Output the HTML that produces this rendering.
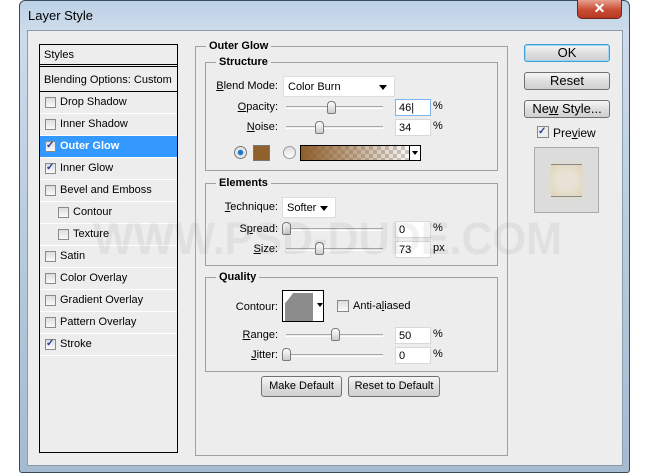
<!DOCTYPE html>
<html><head><meta charset="utf-8"><style>
*{box-sizing:border-box;margin:0;padding:0}
body{width:650px;height:474px;background:#fff;position:relative;overflow:hidden;font-family:"Liberation Sans",sans-serif;font-size:11px;color:#000}
.a{position:absolute}
.frame{left:19px;top:0;width:611px;height:473px;border:1px solid #3a4a5a;border-radius:6px 6px 3px 3px;background:linear-gradient(180deg,#bcd1e6 0%,#cddcec 30px,#b4c8dc 60%,#a6bbd0 100%)}
.client{left:27px;top:30px;width:596px;height:436px;background:#ededed;border:1px solid #8d9aa8}
.close{left:577px;top:0;width:45px;height:19px;border:1px solid #6b2418;border-top:none;border-radius:0 0 5px 5px;background:linear-gradient(#e8a090,#c84b34 55%,#b83a24);color:#fff;font-weight:bold;font-size:14px;text-align:center;line-height:17px}
.list{left:39px;top:44px;width:139px;height:409px;border:1px solid #000;background:#ededed}
.row{position:absolute;left:0;width:137px;height:22px;border-bottom:1px solid #fff;line-height:21px;padding-left:20px}
.cb{position:absolute;width:11px;height:11px;border:1px solid #8a8a8a;background:linear-gradient(#ddd,#fafafa);top:5px;left:5px}
.cb.on::after{content:"✓";position:absolute;left:0;top:-3px;font-size:10px;color:#2a3a9a;font-weight:bold;line-height:14px}
.gb{position:absolute;border:1px solid #a0a0a0}
.gt{position:absolute;background:#ededed;font-weight:bold;padding:0 3px;top:-8px;left:10px;line-height:14px}
.lab{position:absolute;text-align:right;width:90px}
.in{position:absolute;background:#fff;height:17px;width:36px;border:1px solid #d8d8d8;padding-left:3px;line-height:16px}
.tr{position:absolute;height:3px;border-top:1px solid #a8a8a8;border-bottom:1px solid #fff;width:97px}
.th{position:absolute;width:9px;height:13px;border:1px solid #7a7a7a;border-radius:4px 4px 2px 2px;background:linear-gradient(#fff,#ccc)}
.dd{position:absolute;background:#fff;border:1px solid #ddd;padding-left:4px;line-height:20px;height:21px}
.dd::after{content:"";position:absolute;right:7px;top:8px;border:4px solid transparent;border-top:5px solid #000}
.btn{position:absolute;border:1px solid #707070;border-radius:3px;background:linear-gradient(#f6f6f6,#dedede 50%,#d0d0d0);text-align:center;line-height:19px;font-size:12px}
u{text-decoration:underline}
</style></head><body>
<div class="a frame"></div>
<div class="a" style="left:28px;top:8px;font-size:13px;color:#000">Layer Style</div>
<div class="a close">✕</div>
<div class="a client"></div>

<div class="a list">
 <div class="row" style="top:0;height:22px;padding-left:4px;border-bottom:3px double #000">Styles</div>
 <div class="row" style="top:25px;height:22px;padding-left:4px;border-bottom:1px solid #000">Blending Options: Custom</div>
 <div class="row" style="top:47px"><span class="cb"></span>Drop Shadow</div>
 <div class="row" style="top:69px"><span class="cb"></span>Inner Shadow</div>
 <div class="row" style="top:91px;background:#3399ff;color:#fff;font-weight:bold"><span class="cb on"></span>Outer Glow</div>
 <div class="row" style="top:113px"><span class="cb on"></span>Inner Glow</div>
 <div class="row" style="top:135px"><span class="cb"></span>Bevel and Emboss</div>
 <div class="row" style="top:157px;padding-left:33px"><span class="cb" style="left:18px"></span>Contour</div>
 <div class="row" style="top:179px;padding-left:33px"><span class="cb" style="left:18px"></span>Texture</div>
 <div class="row" style="top:201px"><span class="cb"></span>Satin</div>
 <div class="row" style="top:223px"><span class="cb"></span>Color Overlay</div>
 <div class="row" style="top:245px"><span class="cb"></span>Gradient Overlay</div>
 <div class="row" style="top:267px"><span class="cb"></span>Pattern Overlay</div>
 <div class="row" style="top:289px"><span class="cb on"></span>Stroke</div>
</div>

<div class="gb" style="left:195px;top:46px;width:313px;height:410px"><div class="gt">Outer Glow</div></div>
<div class="gb" style="left:205px;top:62px;width:293px;height:109px"><div class="gt">Structure</div></div>
<div class="gb" style="left:205px;top:183px;width:293px;height:83px"><div class="gt">Elements</div></div>
<div class="gb" style="left:205px;top:277px;width:293px;height:95px"><div class="gt">Quality</div></div>

<div class="lab" style="left:188px;top:80px"><u>B</u>lend Mode:</div>
<div class="dd" style="left:283px;top:76px;width:112px">Color Burn</div>
<div class="lab" style="left:188px;top:101px"><u>O</u>pacity:</div>
<div class="tr" style="left:286px;top:106px"></div><div class="th" style="left:327px;top:101px"></div>
<div class="in" style="left:395px;top:99px;border-color:#7eb4ea">46|</div><div class="a" style="left:433px;top:100px">%</div>
<div class="lab" style="left:188px;top:121px"><u>N</u>oise:</div>
<div class="tr" style="left:286px;top:126px"></div><div class="th" style="left:315px;top:121px"></div>
<div class="in" style="left:395px;top:119px">34</div><div class="a" style="left:433px;top:120px">%</div>
<div class="a" style="left:234px;top:146px;width:13px;height:13px;border-radius:50%;border:1px solid #777;background:radial-gradient(#1e78c8 30%,#e8e8e8 40%)"></div>
<div class="a" style="left:253px;top:145px;width:17px;height:16px;background:#91612b;border:1px solid #777"></div>
<div class="a" style="left:283px;top:146px;width:13px;height:13px;border-radius:50%;border:1px solid #999;background:linear-gradient(#ddd,#fff)"></div>
<div class="a" style="left:300px;top:145px;width:121px;height:16px;border:1px solid #000;background:linear-gradient(90deg,#8d5e2a,rgba(141,94,42,0) 95%),repeating-conic-gradient(#ccc 0 25%,#fff 0 50%) 0 0/8px 8px"></div>
<div class="a" style="left:409px;top:146px;width:11px;height:14px;background:#fff;border-left:1px solid #000"></div>
<div class="a" style="left:412px;top:151px;border:3px solid transparent;border-top:4px solid #000"></div>

<div class="lab" style="left:188px;top:201px"><u>T</u>echnique:</div>
<div class="dd" style="left:282px;top:197px;width:54px">Softer</div>
<div class="lab" style="left:188px;top:223px">S<u>p</u>read:</div>
<div class="tr" style="left:286px;top:228px"></div><div class="th" style="left:282px;top:222px"></div>
<div class="in" style="left:395px;top:221px">0</div><div class="a" style="left:433px;top:222px">%</div>
<div class="lab" style="left:188px;top:243px"><u>S</u>ize:</div>
<div class="tr" style="left:286px;top:248px"></div><div class="th" style="left:315px;top:242px"></div>
<div class="in" style="left:395px;top:241px">73</div><div class="a" style="left:433px;top:242px">px</div>

<div class="lab" style="left:188px;top:301px">Contour:</div>
<div class="a" style="left:282px;top:290px;width:42px;height:32px;border:1px solid #000;background:#fff"></div>
<svg class="a" style="left:283px;top:291px" width="40" height="30"><path d="M2 30 L2 12 Q6 8 10 2 L30 2 L30 30 Z" fill="#8c8c8c"/><path d="M34 12 l6 0 l-3 4z" fill="#000"/></svg>
<div class="a" style="left:337px;top:300px;width:12px;height:12px;border:1px solid #888;background:linear-gradient(#ddd,#fafafa)"></div>
<div class="a" style="left:353px;top:300px">Anti-a<u>l</u>iased</div>
<div class="lab" style="left:188px;top:329px"><u>R</u>ange:</div>
<div class="tr" style="left:286px;top:334px"></div><div class="th" style="left:331px;top:328px"></div>
<div class="in" style="left:395px;top:327px">50</div><div class="a" style="left:433px;top:328px">%</div>
<div class="lab" style="left:188px;top:349px"><u>J</u>itter:</div>
<div class="tr" style="left:286px;top:354px"></div><div class="th" style="left:282px;top:348px"></div>
<div class="in" style="left:395px;top:347px">0</div><div class="a" style="left:433px;top:348px">%</div>

<div class="btn" style="left:261px;top:376px;width:81px;height:21px;font-size:11px">Make Default</div>
<div class="btn" style="left:348px;top:376px;width:92px;height:21px;font-size:11px">Reset to Default</div>

<div class="btn" style="left:524px;top:44px;width:86px;height:18px;line-height:16px;border-color:#3c9fd8;box-shadow:inset 0 0 0 1px #9cd6f4;font-size:13px">OK</div>
<div class="btn" style="left:524px;top:72px;width:86px;height:18px;line-height:16px;font-size:13px">Reset</div>
<div class="btn" style="left:524px;top:100px;width:86px;height:18px;line-height:16px;font-size:13px">Ne<u>w</u> Style...</div>
<div class="a" style="left:537px;top:126px;width:12px;height:12px;border:1px solid #888;background:#eee"><span style="position:absolute;left:0;top:-2px;font-size:10px;line-height:14px;font-weight:bold;color:#2a3a9a">✓</span></div>
<div class="a" style="left:553px;top:126px;font-size:12px">Pre<u>v</u>iew</div>
<div class="a" style="left:534px;top:147px;width:65px;height:66px;border:1px solid #aaa;background:#dcdcdc"></div>
<div class="a" style="left:551px;top:164px;width:31px;height:33px;background:radial-gradient(#e8e2d6 40%,#e0d4b4);border-top:1px solid #888;border-bottom:1px solid #888;box-shadow:0 0 8px #e4dcc8"></div>

<svg class="a" style="left:0;top:0;pointer-events:none" width="650" height="474"><text x="93" y="254" textLength="469" lengthAdjust="spacingAndGlyphs" font-family="Liberation Sans" font-weight="bold" font-size="45" fill="#000" fill-opacity="0.05">WWW.PSD-DUDE.COM</text></svg>
</body></html>
